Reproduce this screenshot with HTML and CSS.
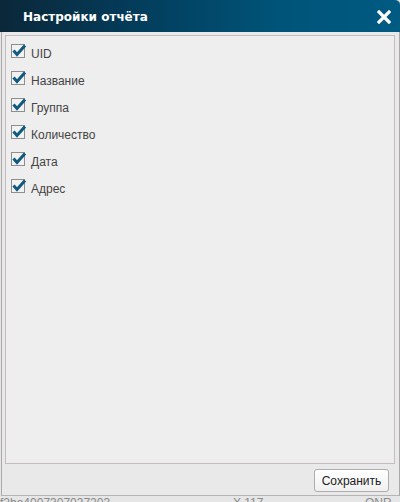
FILE: index.html
```html
<!DOCTYPE html>
<html>
<head>
<meta charset="utf-8">
<link rel="stylesheet" href="styles.css">
</head>
<body>
<div class="dialog">
  <div class="titlebar">
    <span class="title">Настройки отчёта</span>
    <span class="close">
      <svg width="14" height="14" viewBox="0 0 14 14"><path d="M2 2 L12 12 M12 2 L2 12" stroke="#fff" stroke-width="3.2" stroke-linecap="square" fill="none"/></svg>
    </span>
  </div>
  <div class="content">
    <div class="panel">
      <div class="row"><span class="cb"><svg width="16" height="16" viewBox="0 0 16 16"><rect x="0.5" y="1.5" width="13" height="13" fill="#f2f2f2" stroke="#8e8e8e"/><path d="M2.5 7.5 L6 11.5 L14 2.5" stroke="#0f5a7e" stroke-width="3" fill="none"/></svg></span><span class="lbl">UID</span></div>
      <div class="row"><span class="cb"><svg width="16" height="16" viewBox="0 0 16 16"><rect x="0.5" y="1.5" width="13" height="13" fill="#f2f2f2" stroke="#8e8e8e"/><path d="M2.5 7.5 L6 11.5 L14 2.5" stroke="#0f5a7e" stroke-width="3" fill="none"/></svg></span><span class="lbl">Название</span></div>
      <div class="row"><span class="cb"><svg width="16" height="16" viewBox="0 0 16 16"><rect x="0.5" y="1.5" width="13" height="13" fill="#f2f2f2" stroke="#8e8e8e"/><path d="M2.5 7.5 L6 11.5 L14 2.5" stroke="#0f5a7e" stroke-width="3" fill="none"/></svg></span><span class="lbl">Группа</span></div>
      <div class="row"><span class="cb"><svg width="16" height="16" viewBox="0 0 16 16"><rect x="0.5" y="1.5" width="13" height="13" fill="#f2f2f2" stroke="#8e8e8e"/><path d="M2.5 7.5 L6 11.5 L14 2.5" stroke="#0f5a7e" stroke-width="3" fill="none"/></svg></span><span class="lbl">Количество</span></div>
      <div class="row"><span class="cb"><svg width="16" height="16" viewBox="0 0 16 16"><rect x="0.5" y="1.5" width="13" height="13" fill="#f2f2f2" stroke="#8e8e8e"/><path d="M2.5 7.5 L6 11.5 L14 2.5" stroke="#0f5a7e" stroke-width="3" fill="none"/></svg></span><span class="lbl">Дата</span></div>
      <div class="row"><span class="cb"><svg width="16" height="16" viewBox="0 0 16 16"><rect x="0.5" y="1.5" width="13" height="13" fill="#f2f2f2" stroke="#8e8e8e"/><path d="M2.5 7.5 L6 11.5 L14 2.5" stroke="#0f5a7e" stroke-width="3" fill="none"/></svg></span><span class="lbl">Адрес</span></div>
    </div>
  </div>
  <div class="footer">
    <button class="btn">Сохранить</button>
  </div>
</div>
<div class="under">
  <span class="u1">f2ba4007307037203</span>
  <span class="u2">X 117</span>
  <span class="u3">ONR</span>
</div>
</body>
</html>
```
FILE: styles.css
```css
html, body {
  margin: 0;
  padding: 0;
  width: 400px;
  height: 502px;
  overflow: hidden;
  background: #e6e6e6;
  font-family: "Liberation Sans", Arial, sans-serif;
}
.dialog {
  width: 397px;
  height: 495px;
  margin-left: 1px;
  border-left: 1px solid #a9a9a9;
  border-right: 1px solid #a9a9a9;
  border-bottom: 1px solid #b5b5b5;
  background: #e9e9e9;
  display: flex;
  flex-direction: column;
  border-top-right-radius: 4px;
}
.titlebar {
  height: 32px;
  margin-left: -2px;
  margin-right: -1px;
  background: linear-gradient(to right, #0b2739 0%, #033d5c 35%, #005479 70%, #005a82 100%);
  display: flex;
  align-items: center;
  justify-content: space-between;
  border-top-right-radius: 5px;
  flex: none;
}
.title {
  font-family: "DejaVu Sans", sans-serif;
  font-weight: bold;
  font-size: 12px;
  color: #ffffff;
  padding-left: 23px;
  padding-top: 1px;
}
.close {
  display: flex;
  margin-right: 9px;
  margin-top: 1px;
}
.content {
  padding: 3px 4px 0 3px;
  flex: none;
}
.panel {
  border: 1px solid #c6bcc0;
  background: #eeeeee;
  padding-top: 4px;
  box-sizing: border-box;
  height: 429px;
}
.row {
  height: 27px;
  display: flex;
  align-items: flex-start;
}
.cb {
  display: flex;
  margin-left: 5px;
  margin-top: 3px;
}
.lbl {
  font-size: 12px;
  line-height: 15px;
  color: #444444;
  margin-left: 4px;
  margin-top: 7px;
}
.footer {
  flex: none;
  display: flex;
  justify-content: flex-end;
  padding-top: 5px;
  padding-right: 10px;
}
.btn {
  width: 75px;
  height: 23px;
  border: 1px solid #adadad;
  border-radius: 3px;
  background: linear-gradient(#ffffff, #f0f0f0);
  font-family: "Liberation Sans", Arial, sans-serif;
  font-size: 12px;
  color: #222;
  padding: 0;
  margin: 0;
}
.under {
  display: flex;
  margin-top: 0;
  font-size: 12px;
  line-height: 14px;
  color: #8a8a8a;
  white-space: nowrap;
}
.u1 { width: 233px; }
.u2 { width: 132px; }
.u3 { }
```
